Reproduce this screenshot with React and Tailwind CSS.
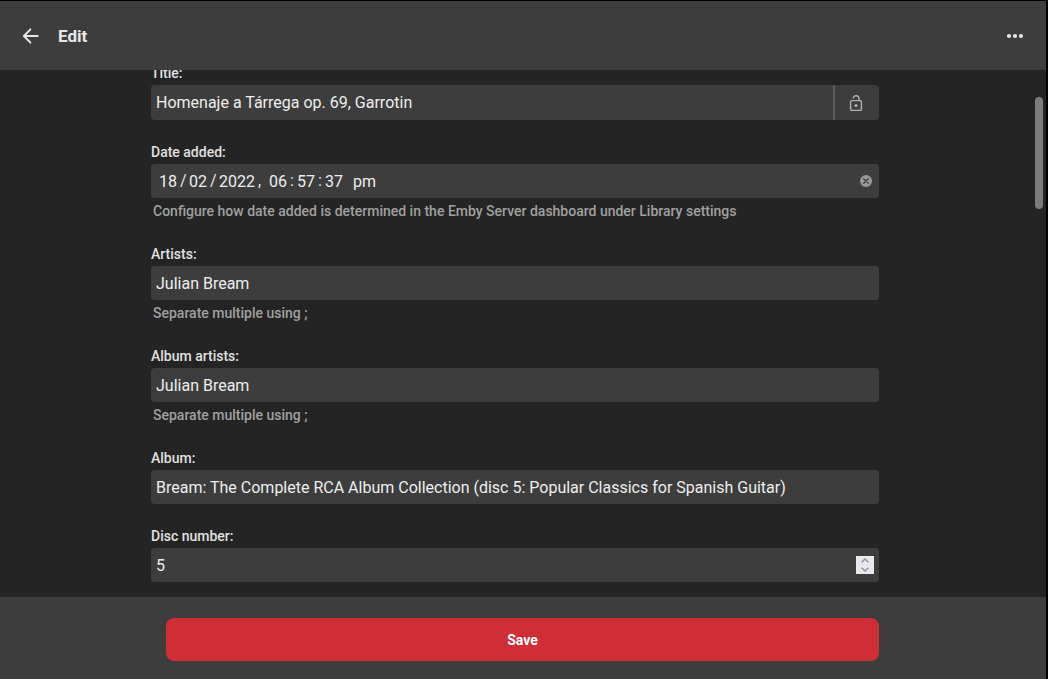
import React, { useState } from 'react';

const INPUT = 'min-w-0 flex-1 h-full bg-transparent px-[5px] text-base text-[#eeeeee] outline-none';

const Field = ({ id, label, hint, children }) => (
  <div>
    <label htmlFor={id} className="block mb-0.5 text-sm leading-5 font-medium text-[#e0e0e0]">{label}</label>
    {children}
    {hint && <p className="mt-0.5 px-0.5 text-sm leading-[22px] font-medium text-[#a0a0a0]">{hint}</p>}
  </div>
);

const TextInput = ({ id, value, onChange }) => (
  <div className="flex h-[34px] rounded bg-[#3d3d3d]">
    <input id={id} name={id} type="text" value={value} onChange={onChange} className={INPUT} />
  </div>
);

// One editable part of the date, followed by its separator
const Segment = ({ id, label, value, wide, sep, onChange }) => (
  <>
    <input
      id={id}
      type="text"
      aria-label={label}
      value={value}
      onChange={onChange}
      className={`${wide ? 'w-[42px]' : 'w-6'} h-full bg-transparent px-[3px] text-base text-[#eeeeee] outline-none`}
    />
    {sep && <span className={sep === '/' ? 'w-1.5' : 'w-1'}>{sep}</span>}
  </>
);

const App = () => {
  const [item, setItem] = useState({
    title: 'Homenaje a Tárrega op. 69, Garrotin',
    artists: 'Julian Bream',
    albumArtists: 'Julian Bream',
    album: 'Bream: The Complete RCA Album Collection (disc 5: Popular Classics for Spanish Guitar)',
    disc: 5,
  });
  const [date, setDate] = useState({ day: '18', month: '02', year: '2022', hour: '06', minute: '57', second: '37', period: 'pm' });

  const edit = (key) => (e) => setItem({ ...item, [key]: e.target.value });
  const editDate = (key) => (e) => setDate({ ...date, [key]: e.target.value });
  const clearDate = () => setDate({ day: '', month: '', year: '', hour: '', minute: '', second: '', period: '' });

  return (
    <div className="flex h-screen flex-col bg-black pt-px pr-0.5 font-['Roboto',sans-serif] text-[#e6e6e6]">
      {/* Header */}
      <header className="flex h-[69px] shrink-0 items-center bg-[#3d3d3d] px-5">
        <button type="button" aria-label="Back" className="p-0.5">
          <svg viewBox="0 0 18 18" className="size-[18px]" fill="none" stroke="currentColor" strokeWidth="2" strokeLinecap="round" strokeLinejoin="round">
            <path d="M15.6 9H2.2M8.4 2.4L1.9 9l6.5 6.6" />
          </svg>
        </button>
        <h1 className="ml-4 text-[17px] leading-6 font-bold">Edit</h1>
        <button type="button" aria-label="More" className="ml-auto p-0.5">
          <svg viewBox="0 0 18 18" className="size-[18px]" fill="currentColor">
            <circle cx="3" cy="9" r="2.1" />
            <circle cx="9" cy="9" r="2.1" />
            <circle cx="15" cy="9" r="2.1" />
          </svg>
        </button>
      </header>

      {/* Scrolled form */}
      <main className="flex min-h-0 flex-1 overflow-hidden bg-[#242424]">
        <form id="edit-form" onSubmit={(e) => e.preventDefault()} className="-mt-[7px] min-w-0 flex-1">
          <div className="mx-auto flex max-w-[728px] flex-col gap-[22px]">
            <Field id="title" label="Title:">
              <div className="flex h-[35px] overflow-hidden rounded bg-[#3d3d3d]">
                <input id="title" type="text" value={item.title} onChange={edit('title')} className={INPUT} />
                <button type="button" aria-label="Lock title" className="flex w-[46px] items-center justify-center border-l-2 border-[#5c5c5c] pr-0.5 text-[#b0b0b0]">
                  <svg viewBox="0 0 14 18" className="h-[18px] w-3.5" fill="none" stroke="currentColor" strokeWidth="1.4">
                    <rect x="1.6" y="6.6" width="10.8" height="9.8" rx="1.2" />
                    <path d="M4.2 4.6C4.2 2.6 5.3 1.7 7 1.7s3 .9 3 2.9v2" />
                    <circle cx="7" cy="11.5" r="1.5" fill="currentColor" stroke="none" />
                  </svg>
                </button>
              </div>
            </Field>

            <Field id="day" label="Date added:" hint="Configure how date added is determined in the Emby Server dashboard under Library settings">
              <div role="group" aria-label="Date added" className="flex h-[34px] items-center rounded bg-[#3d3d3d] pr-[7px] pl-[5px]">
                <Segment id="day" label="Day" value={date.day} onChange={editDate('day')} sep="/" />
                <Segment label="Month" value={date.month} onChange={editDate('month')} sep="/" />
                <Segment label="Year" value={date.year} onChange={editDate('year')} wide sep="," />
                <span className="w-1" />
                <Segment label="Hour" value={date.hour} onChange={editDate('hour')} sep=":" />
                <Segment label="Minute" value={date.minute} onChange={editDate('minute')} sep=":" />
                <Segment label="Second" value={date.second} onChange={editDate('second')} />
                <span className="w-1" />
                <Segment label="AM or PM" value={date.period} onChange={editDate('period')} wide />
                <button type="button" aria-label="Clear date" onClick={clearDate} className="ml-auto text-[#999999]">
                  <svg viewBox="0 0 12 12" className="size-3">
                    <circle cx="6" cy="6" r="6" fill="currentColor" />
                    <path d="M3.7 3.7l4.6 4.6M8.3 3.7L3.7 8.3" stroke="#3d3d3d" strokeWidth="1.3" strokeLinecap="round" />
                  </svg>
                </button>
              </div>
            </Field>

            <Field id="artists" label="Artists:" hint="Separate multiple using ;">
              <TextInput id="artists" value={item.artists} onChange={edit('artists')} />
            </Field>

            <Field id="albumArtists" label="Album artists:" hint="Separate multiple using ;">
              <TextInput id="albumArtists" value={item.albumArtists} onChange={edit('albumArtists')} />
            </Field>

            <Field id="album" label="Album:">
              <TextInput id="album" value={item.album} onChange={edit('album')} />
            </Field>

            <Field id="disc" label="Disc number:">
              <div className="flex h-[34px] items-center rounded bg-[#3d3d3d] pr-[5px]">
                <input id="disc" type="number" value={item.disc} onChange={edit('disc')} className={`${INPUT} [appearance:textfield] [&::-webkit-inner-spin-button]:appearance-none`} />
                <div className="flex size-[18px] flex-col bg-[#e9e9ed] text-[#8f8f9d]">
                  <button type="button" aria-label="Increase" onClick={() => setItem({ ...item, disc: Number(item.disc) + 1 })} className="flex flex-1 items-center justify-center">
                    <svg viewBox="0 0 8 5" className="h-[5px] w-2" fill="none" stroke="currentColor" strokeWidth="1.4"><path d="M.6 4.2L4 1l3.4 3.2" /></svg>
                  </button>
                  <button type="button" aria-label="Decrease" onClick={() => setItem({ ...item, disc: Number(item.disc) - 1 })} className="flex flex-1 items-center justify-center">
                    <svg viewBox="0 0 8 5" className="h-[5px] w-2" fill="none" stroke="currentColor" strokeWidth="1.4"><path d="M.6 .8L4 4 7.4 .8" /></svg>
                  </button>
                </div>
              </div>
            </Field>
          </div>
        </form>

        {/* Scrollbar */}
        <div className="flex w-4 shrink-0 justify-end pt-[27px] pr-[3px]">
          <div className="h-28 w-2 rounded-full bg-[#7c7c7c]" />
        </div>
      </main>

      {/* Footer */}
      <footer className="shrink-0 bg-[#3d3d3d] pt-[21px] pr-4 pb-[18px]">
        <div className="mx-auto max-w-[728px] pl-[15px]">
          <button type="submit" form="edit-form" className="h-[43px] w-full rounded-lg bg-[#cf2e37] text-sm font-bold text-white">
            Save
          </button>
        </div>
      </footer>
    </div>
  );
};

export default App;
